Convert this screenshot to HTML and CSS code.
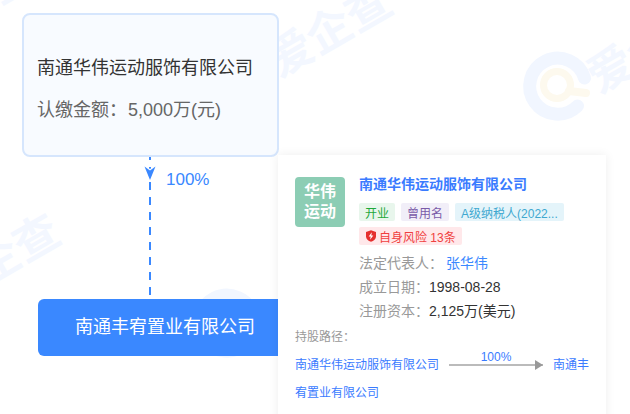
FILE: index.html
```html
<!DOCTYPE html>
<html lang="zh-CN">
<head>
<meta charset="utf-8">
<title>股权穿透</title>
<link rel="stylesheet" href="styles.css">
</head>
<body>
<div class="stage">
  <div class="wm wm-a">爱企查</div>
  <div class="wm wm-b">爱企查</div>
  <div class="wm wm-c">爱企查</div>
  <div class="wm wm-d">爱企查</div>
  <div class="wm wm-e">爱企查</div>
  <svg class="logo logo-a" viewBox="0 0 80 80" width="80" height="80">
    <path d="M67.500 33A28 28 0 1 0 60.500 61" fill="none" stroke="#f1f6ff" stroke-width="13" stroke-linecap="round"/>
    <circle cx="40" cy="40" r="13.500" fill="none" stroke="#fdf9ee" stroke-width="7"/>
    <path d="M52 46L69 48" fill="none" stroke="#fdf9ee" stroke-width="8" stroke-linecap="round"/>
  </svg>
  <svg class="logo logo-b" viewBox="0 0 80 80" width="80" height="80">
    <path d="M67.500 33A28 28 0 1 0 60.500 61" fill="none" stroke="#f1f6ff" stroke-width="13" stroke-linecap="round"/>
  </svg>

  <div class="node node-parent">
    <div class="node-name">南通华伟运动服饰有限公司</div>
    <div class="node-amount">认缴金额<span class="colon">：</span><span class="amount-value">5,000万(元)</span></div>
  </div>

  <svg class="link" viewBox="0 0 20 142" width="20" height="142">
    <line x1="8" y1="0" x2="8" y2="140" stroke="#3a88ff" stroke-width="2" stroke-dasharray="8 7" stroke-dashoffset="5"/>
    <path d="M1 7L8 25L15 7L8 12Z" fill="#fff"/>
    <path d="M2.500 9.500L8 23L13.500 9.500L8 13.500Z" fill="#3a88ff"/>
  </svg>
  <div class="ratio">100%</div>

  <div class="node node-child">南通丰宥置业有限公司</div>

  <section class="card">
    <div class="head">
      <div class="avatar">华伟<br>运动</div>
      <div class="info">
        <div class="title">南通华伟运动服饰有限公司</div>
        <div class="tags">
          <span class="tag tag-green">开业</span>
          <span class="tag tag-purple">曾用名</span>
          <span class="tag tag-cyan">A级纳税人(2022...</span>
          <span class="tag tag-red">
            <svg class="shield" viewBox="0 0 12 12" width="12" height="12">
              <path d="M6 .3L11 2v4.200c0 2.800-2.200 4.600-5 5.600-2.800-1-5-2.800-5-5.600V2Z" fill="#e5302f"/>
              <path d="M6.800 2.300L3.700 6.500h2l-.6 3.200 3.200-4.300h-2Z" fill="#fff"/>
            </svg>自身风险 13条</span>
        </div>
        <div class="rows">
          <div class="row"><span class="label">法定代表人<span class="colon">：</span></span><span class="person">张华伟</span></div>
          <div class="row"><span class="label">成立日期<span class="colon">：</span></span>1998-08-28</div>
          <div class="row"><span class="label">注册资本<span class="colon">：</span></span>2,125万(美元)</div>
        </div>
      </div>
    </div>
    <div class="path-label">持股路径<span class="colon">：</span></div>
    <div class="path">南通华伟运动服饰有限公司<span class="path-arrow"><span class="path-ratio">100%</span></span>南通丰宥置业有限公司</div>
  </section>
</div>
</body>
</html>
```
FILE: styles.css
```css
* { box-sizing: border-box; }
html, body { margin: 0; padding: 0; background: #fff; }
body { font-family: "Liberation Sans", "Noto Sans CJK SC", sans-serif; }

.stage { position: relative; width: 630px; height: 414px; overflow: hidden; }
.colon { font-family: "Noto Sans CJK TC", sans-serif; line-height: 1; }

.wm {
  position: absolute;
  width: 140px;
  font-size: 45px;
  line-height: 48px;
  font-weight: 700;
  white-space: nowrap;
  color: #f3f7ff;
  transform: rotate(-30deg);
}
.wm-a { left: 262px; top: 6px; }
.wm-b { left: -70px; top: 236px; }
.wm-c { left: 582px; top: 22px; }
.wm-d { left: 256px; top: 272px; }
.wm-e { left: -95px; top: -22px; }

.logo { position: absolute; }
.logo-a { left: 517px; top: 45px; }
.logo-b { left: 186px; top: 282px; }

.node { position: absolute; font-size: 18px; }
.node-parent {
  left: 22px;
  top: 13px;
  width: 257px;
  height: 144px;
  padding: 38px 13px 0;
  background: #f8fbff;
  border: 2px solid #d6e6fd;
  border-radius: 8px;
}
.node-name { color: #333; line-height: 30px; }
.node-amount { margin-top: 12px; color: #666; line-height: 30px; }
.amount-value { margin-left: 1px; }

.node-child {
  left: 38px;
  top: 299px;
  width: 250px;
  height: 57px;
  padding-left: 37px;
  background: #3a88ff;
  border-radius: 6px;
  color: #fff;
  line-height: 56px;
}

.link { position: absolute; left: 142px; top: 157px; }
.ratio { position: absolute; left: 166px; top: 170px; font-size: 17px; line-height: 20px; color: #3a88ff; }

.card {
  position: absolute;
  left: 278px;
  top: 155px;
  width: 328px;
  height: 270px;
  padding: 22px 12px 0 17px;
  background: #fff;
  box-shadow: 0 0 10px rgba(0, 0, 0, .07);
}
.head { display: flex; gap: 14px; }
.avatar {
  flex: none;
  width: 50px;
  height: 50px;
  padding-top: 5px;
  background: #8ccdb4;
  border-radius: 4px;
  color: #fff;
  font-size: 16px;
  font-weight: 700;
  line-height: 20px;
  text-align: center;
}
.info { flex: 1; min-width: 0; }
.title { font-size: 14px; font-weight: 700; line-height: 14px; color: #3a7bff; }

.tags { display: flex; flex-wrap: wrap; gap: 6px; margin-top: 12px; padding-right: 5px; }
.tag {
  display: inline-flex;
  align-items: center;
  height: 18px;
  padding: 0 6px;
  border-radius: 2px;
  font-size: 12px;
  white-space: nowrap;
}
.tag-green { background: #e8f6ec; color: #1ea83a; }
.tag-purple { background: #f1eef8; color: #7a5aa8; }
.tag-cyan { background: #e4f4fa; color: #40a8d0; }
.tag-red { background: #ffe8ea; color: #f04040; }
.shield { margin-right: 2px; flex: none; }

.rows { margin-top: 6px; }
.row { font-size: 14px; line-height: 24px; color: #333; }
.label { color: #999; }
.person { margin-left: 3px; color: #3a88ff; }

.path-label { margin-top: 4px; font-size: 12px; line-height: 20px; color: #999; }
.path { margin-top: 4px; font-size: 12px; line-height: 28px; color: #3a7bff; }
.path-arrow {
  position: relative;
  display: inline-block;
  width: 94px;
  height: 2px;
  margin: 0 10px;
  vertical-align: 3px;
  background: #bbb;
}
.path-arrow::after {
  content: "";
  position: absolute;
  right: 0;
  top: -4px;
  border-left: 8px solid #999;
  border-top: 5px solid transparent;
  border-bottom: 5px solid transparent;
}
.path-ratio {
  position: absolute;
  left: 0;
  right: 0;
  top: -14px;
  line-height: 14px;
  text-align: center;
  color: #3a7bff;
}
```
